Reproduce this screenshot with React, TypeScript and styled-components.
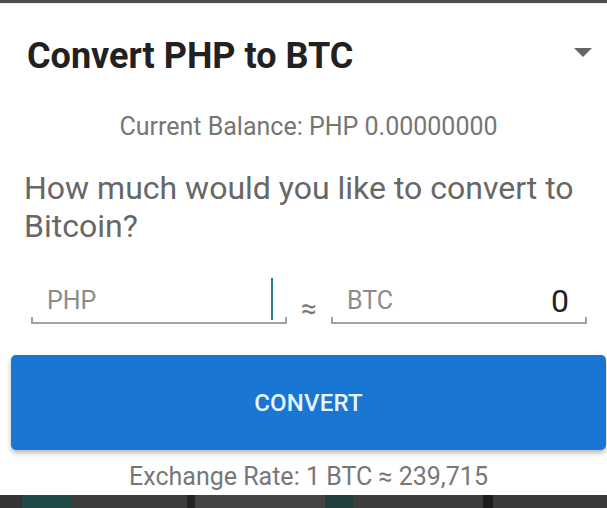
import styled, { createGlobalStyle } from 'styled-components';

const GlobalStyle = createGlobalStyle`
  html, body {
    margin: 0;
    padding: 0;
    background: #ffffff;
  }
  body {
    font-family: Roboto, "Noto Sans", "Liberation Sans", sans-serif;
  }
`;

function ConvertDialog() {
  return (
    <Screen>
      <GlobalStyle />
      <StatusEdge />
      <Dialog>
        <Header>
          <Title>Convert PHP to BTC</Title>
          <DropArrow />
        </Header>
        <Balance>Current Balance: PHP 0.00000000</Balance>
        <Question>How much would you like to convert to Bitcoin?</Question>
        <InputRow>
          <Field>
            <FieldLabel>PHP</FieldLabel>
            <Caret />
          </Field>
          <Approx>≈</Approx>
          <Field>
            <FieldLabel>BTC</FieldLabel>
            <FieldValue>0</FieldValue>
          </Field>
        </InputRow>
        <ConvertButton>CONVERT</ConvertButton>
        <Rate>Exchange Rate: 1 BTC ≈ 239,715</Rate>
      </Dialog>
      <NavStrip>
        <NavPiece $w={22} $color="#343434" />
        <NavPiece $w={50} $color="#1f4a48" />
        <NavPiece $w={115} $color="#3c3c3c" />
        <NavPiece $w={8} $color="#222" />
        <NavPiece $w={130} $color="#444" />
        <NavPiece $w={28} $color="#213f3f" />
        <NavPiece $w={130} $color="#3d3d3d" />
        <NavPiece $w={10} $color="#1c1c1c" />
        <NavPiece $w={114} $color="#3a3a3a" />
      </NavStrip>
    </Screen>
  );
}

export default function App() {
  return <ConvertDialog />;
}

const Screen = styled.div`
  width: 607px;
  height: 508px;
  overflow: hidden;
  display: flex;
  flex-direction: column;
  background: #fff;
`;

const StatusEdge = styled.div`
  height: 3px;
  background: #4e4e4e;
  border-bottom: 1px solid #ececec;
`;

const Dialog = styled.div`
  flex: 1;
  display: flex;
  flex-direction: column;
  padding-left: 11px;
  padding-right: 1px;
`;

const Header = styled.div`
  display: flex;
  justify-content: space-between;
  align-items: flex-start;
  margin-top: 30px;
  padding: 0 14px 0 16px;
`;

const Title = styled.h1`
  margin: 0;
  font-size: 36px;
  line-height: 44px;
  font-weight: 700;
  color: #212121;
`;

const DropArrow = styled.span`
  margin-top: 14px;
  width: 0;
  height: 0;
  border-left: 9px solid transparent;
  border-right: 9px solid transparent;
  border-top: 9px solid #666;
`;

const Balance = styled.div`
  margin-top: 34px;
  text-align: center;
  font-size: 25px;
  line-height: 30px;
  color: #767676;
`;

const Question = styled.p`
  margin: 27px 0 0;
  padding: 0 13px;
  font-size: 32px;
  line-height: 38px;
  color: #676767;
`;

const InputRow = styled.div`
  display: flex;
  align-items: flex-end;
  margin-top: 30px;
  padding-left: 20px;
`;

const Field = styled.div`
  position: relative;
  width: 256px;
  height: 49px;
  border-bottom: 2px solid #a2a2a2;
  display: flex;
  align-items: flex-end;
  justify-content: space-between;
  padding: 0 18px 0 16px;
  box-sizing: border-box;
  &::before,
  &::after {
    content: '';
    position: absolute;
    bottom: -2px;
    width: 2px;
    height: 7px;
    background: #a2a2a2;
  }
  &::before {
    left: 0;
  }
  &::after {
    right: 0;
  }
`;

const FieldLabel = styled.span`
  font-size: 25px;
  line-height: 30px;
  margin-bottom: 6px;
  color: #8c8c8c;
`;

const FieldValue = styled.span`
  font-size: 32px;
  line-height: 38px;
  margin-bottom: 2px;
  color: #222;
`;

const Caret = styled.span`
  position: absolute;
  left: 240px;
  top: 3px;
  width: 2px;
  height: 42px;
  background: #2a7d80;
`;

const Approx = styled.span`
  width: 44px;
  text-align: center;
  font-size: 28px;
  line-height: 28px;
  margin-bottom: 1px;
  color: #777;
`;

const ConvertButton = styled.button`
  margin-top: 31px;
  height: 95px;
  border: none;
  border-radius: 5px;
  background: #1976d2;
  box-shadow: 0 3px 5px rgba(0, 0, 0, 0.28);
  color: #e6f5ff;
  font-family: Roboto, "Noto Sans", "Liberation Sans", sans-serif;
  font-size: 24px;
  font-weight: 500;
  letter-spacing: 0.2px;
  cursor: pointer;
`;

const Rate = styled.div`
  margin-top: 12px;
  text-align: center;
  font-size: 25px;
  line-height: 30px;
  color: #777;
`;

const NavStrip = styled.div`
  height: 13px;
  display: flex;
`;

const NavPiece = styled.span<{ $w: number; $color: string }>`
  width: ${(p) => p.$w}px;
  flex-shrink: 0;
  background: ${(p) => p.$color};
`;
